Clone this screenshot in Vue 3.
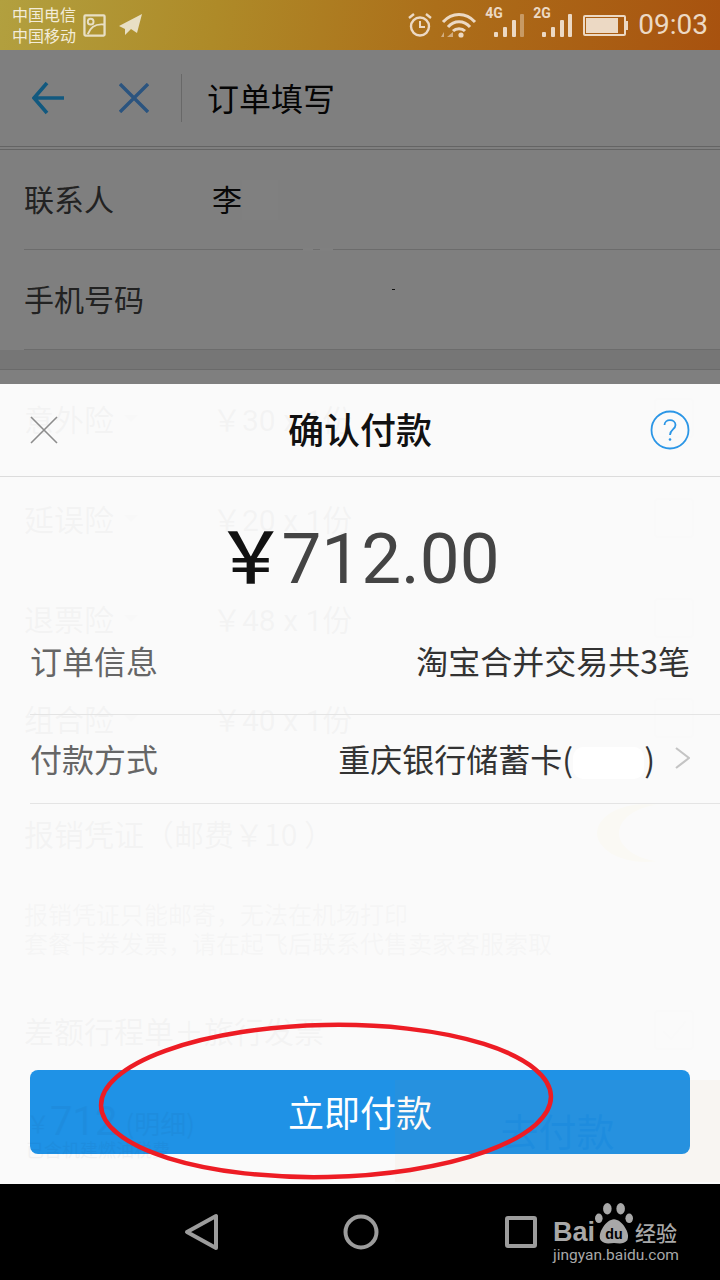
<script setup>
const contactRows = [
  { label: '联系人', value: '李' },
  { label: '手机号码', value: '' }
]

const insurances = [
  { name: '意外险', price: '￥30 x 1份' },
  { name: '延误险', price: '￥20 x 1份' },
  { name: '退票险', price: '￥48 x 1份' },
  { name: '组合险', price: '￥40 x 1份' }
]
</script>

<template>
  <div class="phone">
    <div class="status">
      <div class="carriers">
        <span>中国电信</span>
        <span>中国移动</span>
      </div>
      <svg class="st-pic" width="23" height="23" viewBox="0 0 24 24" fill="none" stroke="#e8dfc4" stroke-width="2.4">
        <rect x="1.5" y="1.5" width="21" height="21" rx="1" />
        <circle cx="8" cy="8" r="3" stroke-width="2" />
        <path d="M5 21 C8 13 14 10 22 11" stroke-width="2" />
      </svg>
      <svg class="st-plane" width="24" height="24" viewBox="0 0 24 24">
        <path d="M0 13 L23 1 L18 20 L12 16 L6 22 L6 16 Z" fill="#e8dfc4" />
      </svg>
      <div class="status-right">
        <svg width="26" height="26" viewBox="0 0 26 26" fill="none" stroke="#ecd9c4" stroke-width="2.4">
          <circle cx="13" cy="14.5" r="9" />
          <path d="M13 9 V15 H18" stroke-width="2" />
          <path d="M2 6 L7 2 M24 6 L19 2" />
        </svg>
        <svg class="st-wifi" width="36" height="26" viewBox="0 0 36 26" fill="none" stroke="#ecd9c4" stroke-width="3">
          <path d="M2 10 C11 0 25 0 34 10" />
          <path d="M7 15 C13 8 23 8 29 15" />
          <path d="M12 19 C15 16 21 16 24 19" />
          <circle cx="20" cy="23" r="2.6" fill="#ecd9c4" stroke="none" />
          <path d="M0 25 L3 20 V25 Z M6 25 L12 20 V25 Z" fill="#ecd9c4" fill-opacity=".6" stroke="none" />
        </svg>
        <div class="signal">
          <span class="net">4G</span>
          <i class="b1"></i><i class="b2"></i><i class="b3"></i><i class="b4 weak"></i>
        </div>
        <div class="signal">
          <span class="net">2G</span>
          <i class="b1"></i><i class="b2"></i><i class="b3"></i><i class="b4"></i>
        </div>
        <div class="battery"><i></i></div>
        <span class="clock">09:03</span>
      </div>
    </div>

    <div class="page">
      <div class="topbar">
        <svg class="ic-back" width="34" height="34" viewBox="0 0 34 34" fill="none" stroke="#24b2ff" stroke-width="3.6">
          <path d="M32 17 H2 M15 2 L2 17 L15 32" />
        </svg>
        <svg class="ic-close" width="30" height="30" viewBox="0 0 30 30" fill="none" stroke="#56a8ff" stroke-width="3.4">
          <path d="M1 1 L29 29 M29 1 L1 29" />
        </svg>
        <div class="divider"></div>
        <div class="top-title">订单填写</div>
      </div>

      <div v-for="row in contactRows" :key="row.label" class="form-row">
        <span class="form-label">{{ row.label }}</span>
        <span class="form-value">{{ row.value }}</span>
      </div>
      <div class="band"></div>

      <div v-for="item in insurances" :key="item.name" class="ins-row">
        <span class="ins-name">{{ item.name }}</span>
        <span class="ins-arrow"></span>
        <span class="ins-price">{{ item.price }}</span>
        <span class="ins-check"></span>
      </div>

      <div class="receipt">
        <span>报销凭证（邮费￥10 ）</span>
        <span class="toggle"></span>
      </div>
      <div class="receipt-note">
        <p>报销凭证只能邮寄，无法在机场打印</p>
        <p>套餐卡券发票，请在起飞后联系代售卖家客服索取</p>
      </div>
      <div class="diff-row">
        <span>差额行程单＋旅行发票</span>
        <span class="ins-check">
          <svg width="36" height="36" viewBox="0 0 36 36" fill="none" stroke="#ccc" stroke-width="2">
            <path d="M7 19 L15 27 L30 9" />
          </svg>
        </span>
      </div>
      <div class="paybar">
        <div class="pay-left">
          <div class="pay-main"><span class="pay-yen">￥</span><span class="pay-total">712</span><span class="pay-detail">(明细)</span></div>
          <div class="pay-sub">已含机建燃油税费</div>
        </div>
        <div class="pay-right">去付款</div>
      </div>

      <div class="dim"></div>
      <span class="blot blot-name"></span>
      <span class="blot blot-line"></span>
      <span class="blot blot-seg"></span>
      <span class="blot blot-dot"></span>

      <div class="sheet">
        <div class="sheet-head">
          <svg class="sheet-close" width="28" height="28" viewBox="0 0 28 28" fill="none" stroke="#8c8c8c" stroke-width="1.6">
            <path d="M1 1 L27 27 M27 1 L1 27" />
          </svg>
          <div class="sheet-title">确认付款</div>
          <svg class="sheet-help" width="40" height="40" viewBox="0 0 40 40" fill="none" stroke="#2b96e6">
            <circle cx="20" cy="20" r="18.5" stroke-width="1.8" />
            <path d="M14.5 15 C14.5 8.5 25.5 8.5 25.5 15 C25.5 19.5 20 19.5 20 25" stroke-width="1.8" />
            <circle cx="20" cy="29.5" r="1.3" fill="#2b96e6" stroke="none" />
          </svg>
        </div>
        <div class="amount"><span class="yen">￥</span>712.00</div>
        <div class="info-row first">
          <span class="info-label">订单信息</span>
          <span class="info-value">淘宝合并交易共3笔</span>
        </div>
        <div class="info-row second">
          <span class="info-label">付款方式</span>
          <span class="info-value">重庆银行储蓄卡(<span class="masked"></span>)</span>
          <svg class="chev" width="16" height="24" viewBox="0 0 16 24" fill="none" stroke="#c4c4c4" stroke-width="2.2">
            <path d="M2 2 L15 12 L2 22" />
          </svg>
        </div>
        <button class="pay-btn">立即付款</button>
      </div>

      <svg class="circle-mark" width="470" height="170" viewBox="0 0 470 170" fill="none">
        <ellipse cx="235" cy="85" rx="225" ry="76" transform="rotate(-1.2 235 85)" stroke="#ed1c24" stroke-width="4.5" />
      </svg>
    </div>

    <div class="navbar">
      <svg class="nav-back" width="36" height="38" viewBox="0 0 36 38" fill="none" stroke="#9c9c9c" stroke-width="4" stroke-linejoin="round">
        <path d="M32 3 V35 L3 19 Z" />
      </svg>
      <svg class="nav-home" width="36" height="36" viewBox="0 0 36 36" fill="none" stroke="#9c9c9c" stroke-width="4">
        <circle cx="18" cy="18" r="15.5" />
      </svg>
      <svg class="nav-recent" width="32" height="32" viewBox="0 0 32 32" fill="none" stroke="#9c9c9c" stroke-width="4" stroke-linejoin="round">
        <rect x="2" y="2" width="28" height="28" rx="1" />
      </svg>
      <div class="watermark">
        <div class="wm-main">
          <span class="wm-bai">Bai</span>
          <svg class="wm-paw" width="38" height="42" viewBox="0 0 40 44">
            <g fill="#a8a8a8">
              <ellipse cx="4" cy="16" rx="4" ry="5" />
              <ellipse cx="13" cy="6" rx="4.5" ry="6" />
              <ellipse cx="27" cy="6" rx="4.5" ry="6" />
              <ellipse cx="36" cy="16" rx="4" ry="5" />
              <path d="M20 17 C28 17 38 32 34 39 C30 44 24 42 20 42 C16 42 10 44 6 39 C2 32 12 17 20 17 Z" />
            </g>
            <text x="20" y="38" text-anchor="middle" class="wm-du">du</text>
          </svg>
          <span class="wm-cn">经验</span>
        </div>
        <div class="wm-url">jingyan.baidu.com</div>
      </div>
    </div>
  </div>
</template>

<style scoped>
.phone {
  width: 720px;
  height: 1280px;
  display: flex;
  flex-direction: column;
  overflow: hidden;
  font-family: "Noto Sans CJK SC", "Noto Sans", sans-serif;
}

.status {
  height: 50px;
  flex: none;
  display: flex;
  align-items: center;
  padding-left: 12px;
  padding-right: 12px;
  background: linear-gradient(100deg, #b2a03f 0%, #ae8a28 30%, #ac6f1a 60%, #a8520f 100%);
  color: #f3ecd9;
}

.carriers {
  display: flex;
  flex-direction: column;
  font-size: 16px;
  line-height: 21px;
  width: 71px;
  white-space: nowrap;
}

.st-plane {
  margin-left: 13px;
}

.status-right {
  margin-left: auto;
  display: flex;
  align-items: center;
  color: #ecd9c4;
}

.st-wifi {
  margin-left: 8px;
}

.signal {
  width: 40px;
  height: 26px;
  margin-left: 8px;
  position: relative;
}

.net {
  position: absolute;
  left: 0;
  top: -6px;
  font: 700 14px/14px Roboto, sans-serif;
}

.signal i {
  position: absolute;
  bottom: 1px;
  width: 4px;
  background: #ecd9c4;
  border-radius: 1px;
}

.b1 { left: 9px; height: 5px; }
.b2 { left: 18px; height: 10px; }
.b3 { left: 27px; height: 17px; }
.b4 { left: 35px; height: 23px; }
.b4.weak { opacity: .45; }

.battery {
  width: 43px;
  height: 21px;
  margin-left: 10px;
  border: 2px solid #ecd9c4;
  border-radius: 2px;
  padding: 1px;
  box-sizing: border-box;
  position: relative;
}

.battery i {
  display: block;
  width: 32px;
  height: 15px;
  background: #ecd9c4;
}

.battery::after {
  content: "";
  position: absolute;
  right: -4px;
  top: 4px;
  width: 2px;
  height: 9px;
  background: #ecd9c4;
}

.clock {
  margin-left: 12px;
  font: 400 28px/34px Roboto, sans-serif;
}

.page {
  position: relative;
  flex: 1;
  background: #fff;
  overflow: hidden;
}

.topbar {
  height: 96px;
  display: flex;
  align-items: center;
  border-bottom: 4px double #c8c8c8;
  padding-left: 32px;
}

.ic-close {
  margin-left: 53px;
}

.divider {
  width: 1px;
  height: 48px;
  background: #d0d0d0;
  margin-left: 32px;
}

.top-title {
  margin-left: 25px;
  margin-bottom: 3px;
  font-size: 32px;
  color: #0a0a0a;
}

.form-row {
  height: 100px;
  box-sizing: border-box;
  margin-left: 24px;
  padding-bottom: 4px;
  border-bottom: 1px solid #d8d8d8;
  display: flex;
  align-items: center;
  font-size: 30px;
  color: #444;
}

.form-label {
  width: 188px;
}

.form-value {
  color: #111;
}

.band {
  height: 20px;
  box-sizing: border-box;
  background: #ececec;
  border-bottom: 1px solid #d4d4d4;
}

.ins-row {
  height: 100px;
  box-sizing: border-box;
  padding-bottom: 4px;
  margin-left: 24px;
  display: flex;
  align-items: center;
  font-size: 30px;
  color: #333;
}

.ins-name {
  width: 90px;
}

.ins-arrow {
  width: 0;
  height: 0;
  border: 7px solid transparent;
  border-top-color: #bbb;
  margin: 8px 0 0 10px;
}

.ins-price {
  margin-left: 74px;
  font-family: Roboto, "Noto Sans CJK SC", sans-serif;
}

.ins-check {
  width: 40px;
  height: 40px;
  margin-left: auto;
  margin-right: 26px;
  border: 2px solid #ccc;
  border-radius: 4px;
  box-sizing: border-box;
}

.receipt {
  height: 90px;
  padding-top: 18px;
  margin-left: 24px;
  display: flex;
  align-items: center;
  font-size: 30px;
  color: #333;
}

.toggle {
  width: 96px;
  height: 58px;
  margin-left: auto;
  margin-right: 27px;
  border-radius: 50%;
  box-shadow: inset 22px 0 0 #f5d24a;
}

.receipt-note {
  padding: 21px 24px 0;
  font-size: 24px;
  line-height: 29px;
  color: #666;
  white-space: nowrap;
}

.receipt-note p {
  margin: 0;
}

.diff-row {
  height: 64px;
  margin-top: 41px;
  margin-left: 24px;
  margin-bottom: 18px;
  box-sizing: border-box;
  display: flex;
  align-items: center;
  font-size: 30px;
  color: #333;
}

.paybar {
  display: flex;
  height: 102px;
  position: relative;
  z-index: 2;
  opacity: .035;
}

.pay-left {
  width: 395px;
  padding: 22px 0 0 26px;
  box-sizing: border-box;
  color: #112;
}

.pay-main {
  height: 40px;
  display: flex;
  align-items: center;
}

.pay-yen {
  font-size: 24px;
  width: 24px;
}

.pay-total {
  font: 400 40px/40px Roboto, sans-serif;
}

.pay-detail {
  font-size: 26px;
  margin-left: 8px;
}

.pay-sub {
  font-size: 18px;
  line-height: 14px;
}

.pay-right {
  flex: 1;
  background: #e0843c;
  color: #112;
  font-size: 38px;
  line-height: 100px;
  text-align: center;
}

.dim {
  position: absolute;
  left: 0;
  top: 0;
  width: 100%;
  height: 334px;
  background: rgba(0, 0, 0, .5);
}

.blot {
  position: absolute;
  background: #808080;
}

.blot-name {
  left: 242px;
  top: 130px;
  width: 36px;
  height: 40px;
}

.blot-line {
  left: 303px;
  top: 198px;
  width: 30px;
  height: 3px;
}

.blot-seg {
  left: 313px;
  top: 199px;
  width: 7px;
  height: 1px;
  background: #6e6e6e;
}

.blot-dot {
  left: 392px;
  top: 239px;
  width: 3px;
  height: 1px;
  background: #111;
}

.sheet {
  position: absolute;
  z-index: 1;
  left: 0;
  top: 334px;
  width: 100%;
  height: 800px;
  display: flex;
  flex-direction: column;
  background: rgba(250, 250, 250, .97);
}

.sheet-head {
  height: 92px;
  flex: none;
  display: grid;
  grid-template-columns: 1fr auto 1fr;
  align-items: center;
  padding: 0 30px;
  border-bottom: 1px solid #dcdcdc;
}

.sheet-help {
  justify-self: end;
}

.sheet-title {
  font-size: 36px;
  font-weight: 500;
  color: #111;
  margin-top: -5px;
}

.amount {
  margin-top: 42px;
  height: 79px;
  padding-right: 5px;
  text-align: center;
  font: 400 71px/79px Roboto, "Noto Sans CJK SC", sans-serif;
  color: #444;
}

.yen {
  color: #111;
  font-weight: 500;
  margin-right: -5px;
}

.info-row {
  display: flex;
  align-items: center;
  margin-left: 30px;
  padding-right: 30px;
  font-size: 32px;
}

.info-row.first {
  margin-top: 24px;
  height: 76px;
  padding-bottom: 16px;
  border-bottom: 1px solid #e4e4e4;
}

.info-row.second {
  height: 85px;
  padding-bottom: 3px;
  border-bottom: 1px solid #e4e4e4;
}

.info-label {
  color: #666;
}

.info-value {
  margin-left: auto;
  color: #333;
}

.masked {
  display: inline-block;
  width: 71px;
  height: 32px;
  vertical-align: middle;
  background: #fff;
  border-radius: 10px;
}

.chev {
  margin-left: 19px;
}

.pay-btn {
  margin: auto 30px 30px;
  height: 84px;
  flex: none;
  border: 0;
  padding: 0 0 3px;
  border-radius: 8px;
  background: #1f92e6;
  color: #fff;
  font-family: inherit;
  font-size: 36px;
}

.circle-mark {
  position: absolute;
  z-index: 3;
  left: 91px;
  top: 966px;
}

.navbar {
  height: 96px;
  flex: none;
  position: relative;
  display: flex;
  align-items: center;
  background: #000;
  padding-left: 184px;
}

.nav-home {
  margin-left: 123px;
}

.nav-recent {
  margin-left: 126px;
}

.watermark {
  margin-left: 16px;
  margin-top: 4px;
  color: #a8a8a8;
}

.wm-main {
  display: flex;
  align-items: flex-end;
  height: 42px;
}

.wm-bai {
  font: 700 27px/30px "Liberation Sans", sans-serif;
  margin-bottom: -2px;
}

.wm-du {
  font: 700 15px "Liberation Sans", sans-serif;
  fill: #000;
}

.wm-cn {
  font-size: 21px;
  line-height: 30px;
  font-weight: 500;
  margin-left: 2px;
  margin-bottom: -2px;
}

.wm-url {
  font: 400 15.5px/20px Roboto, sans-serif;
  white-space: nowrap;
}
</style>

<style>
html,
body {
  margin: 0;
  background: #000;
}
</style>
